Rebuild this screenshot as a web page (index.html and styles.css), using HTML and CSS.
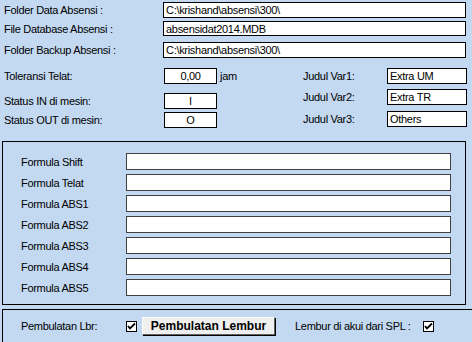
FILE: index.html
```html
<!DOCTYPE html>
<html>

<head>
    <meta charset="utf-8" />
    <title>Setting Absensi</title>
    <link rel="stylesheet" href="styles.css">
</head>

<body>

<div class="top">
    <div class="path-row">
        <span class="lbl">Folder Data Absensi :</span>
        <div class="field">C:\krishand\absensi\300\</div>
    </div>
    <div class="path-row r2">
        <span class="lbl">File Database Absensi :</span>
        <div class="field">absensidat2014.MDB</div>
    </div>
    <div class="path-row r3">
        <span class="lbl">Folder Backup Absensi :</span>
        <div class="field">C:\krishand\absensi\300\</div>
    </div>
</div>

<div class="opts">
    <div class="opts-left">
        <div class="opt-row">
            <span class="lbl-wide">Toleransi Telat:</span>
            <span class="box">0,00</span>
            <span class="unit">jam</span>
        </div>
        <div class="opt-row l2">
            <span class="lbl-wide">Status IN di mesin:</span>
            <span class="box">I</span>
        </div>
        <div class="opt-row l3">
            <span class="lbl-wide">Status OUT di mesin:</span>
            <span class="box">O</span>
        </div>
    </div>
    <div class="opts-right">
        <div class="opt-row">
            <span class="lbl-var">Judul Var1:</span>
            <span class="var-box">Extra UM</span>
        </div>
        <div class="opt-row v2">
            <span class="lbl-var">Judul Var2:</span>
            <span class="var-box">Extra TR</span>
        </div>
        <div class="opt-row v3">
            <span class="lbl-var">Judul Var3:</span>
            <span class="var-box">Others</span>
        </div>
    </div>
</div>

<div class="formula">
    <div class="f-row"><span class="f-lbl">Formula Shift</span><div class="f-input"></div></div>
    <div class="f-row"><span class="f-lbl">Formula Telat</span><div class="f-input"></div></div>
    <div class="f-row"><span class="f-lbl">Formula ABS1</span><div class="f-input"></div></div>
    <div class="f-row"><span class="f-lbl">Formula ABS2</span><div class="f-input"></div></div>
    <div class="f-row"><span class="f-lbl">Formula ABS3</span><div class="f-input"></div></div>
    <div class="f-row"><span class="f-lbl">Formula ABS4</span><div class="f-input"></div></div>
    <div class="f-row"><span class="f-lbl">Formula ABS5</span><div class="f-input"></div></div>
</div>

<div class="bottom">
    <div class="b-row">
        <span class="f-lbl">Pembulatan Lbr:</span>
        <span class="chk"><svg width="9" height="9" viewBox="0 0 9 9"><path d="M1 4 L3 6.5 L8 1.5" fill="none" stroke="#000" stroke-width="1.8"/></svg></span>
        <button class="btn">Pembulatan Lembur</button>
        <span class="spl-lbl">Lembur di akui dari SPL :</span>
        <span class="chk"><svg width="9" height="9" viewBox="0 0 9 9"><path d="M1 4 L3 6.5 L8 1.5" fill="none" stroke="#000" stroke-width="1.8"/></svg></span>
    </div>
</div>

</body>

</html>
```

FILE: styles.css
```css
* {
    padding: 0;
    margin: 0;
    box-sizing: border-box;
}

body {
    width: 472px;
    height: 342px;
    overflow: hidden;
    background: #c3d9f1;
    font-family: "Liberation Sans", Arial, sans-serif;
    font-size: 11px;
    letter-spacing: -0.3px;
    color: #000;
}

/* folder / database rows */
.top {
    padding: 2px 6px 0 4px;
}

.path-row {
    display: flex;
    align-items: center;
    height: 16px;
}

.path-row.r2 {
    margin-top: 3px;
    height: 15px;
}

.path-row.r3 {
    margin-top: 6px;
}

.lbl {
    width: 159px;
}

.field {
    flex: 1;
    height: 100%;
    background: #fff;
    border: 1px solid #000;
    padding-left: 2px;
    line-height: 14px;
}

/* toleransi / status / judul var */
.opts {
    display: flex;
    height: 60px;
    margin-top: 10px;
    padding-left: 4px;
}

.opts-left {
    width: 299px;
}

.opt-row {
    display: flex;
    align-items: center;
    height: 16px;
}

.opt-row.l2 {
    margin-top: 9px;
}

.opt-row.l3 {
    margin-top: 3px;
}

.opt-row.v2 {
    margin-top: 5px;
}

.opt-row.v3 {
    margin-top: 6px;
}

.lbl-wide {
    width: 160px;
}

.box {
    width: 53px;
    height: 16px;
    background: #fff;
    border: 1px solid #000;
    text-align: center;
    line-height: 14px;
}

.unit {
    margin-left: 3px;
}

.lbl-var {
    width: 84px;
}

.var-box {
    width: 80px;
    height: 16px;
    background: #fff;
    border: 1px solid #000;
    padding-left: 2px;
    line-height: 14px;
}

/* formula panel */
.formula {
    width: 464px;
    height: 164px;
    margin: 13px 0 0 2px;
    border: 1px solid #000;
    padding: 11px 0 0 18px;
}

.f-row {
    display: flex;
    align-items: center;
    height: 17px;
    margin-bottom: 4px;
}

.f-lbl {
    width: 105px;
}

.f-input {
    width: 325px;
    height: 17px;
    background: #fff;
    border: 1px solid #404040;
}

/* bottom panel */
.bottom {
    width: 480px;
    height: 40px;
    margin: 4px 0 0 2px;
    border-top: 1px solid #000;
    border-left: 1px solid #000;
    padding: 7px 0 0 18px;
}

.b-row {
    display: flex;
    align-items: center;
    height: 18px;
}

.chk {
    width: 11px;
    height: 11px;
    background: #fff;
    border: 1px solid #000;
    display: flex;
    align-items: center;
    justify-content: center;
}

.btn {
    width: 133px;
    height: 18px;
    margin: 0 20px 0 5px;
    background: #efefef;
    border: 1px solid #fff;
    border-right-color: #606060;
    border-bottom-color: #606060;
    box-shadow: 1px 1px 0 #000;
    font-family: "Liberation Sans", Arial, sans-serif;
    font-size: 12px;
    font-weight: bold;
    letter-spacing: 0;
    color: #000;
}

.spl-lbl {
    width: 128px;
}
```
